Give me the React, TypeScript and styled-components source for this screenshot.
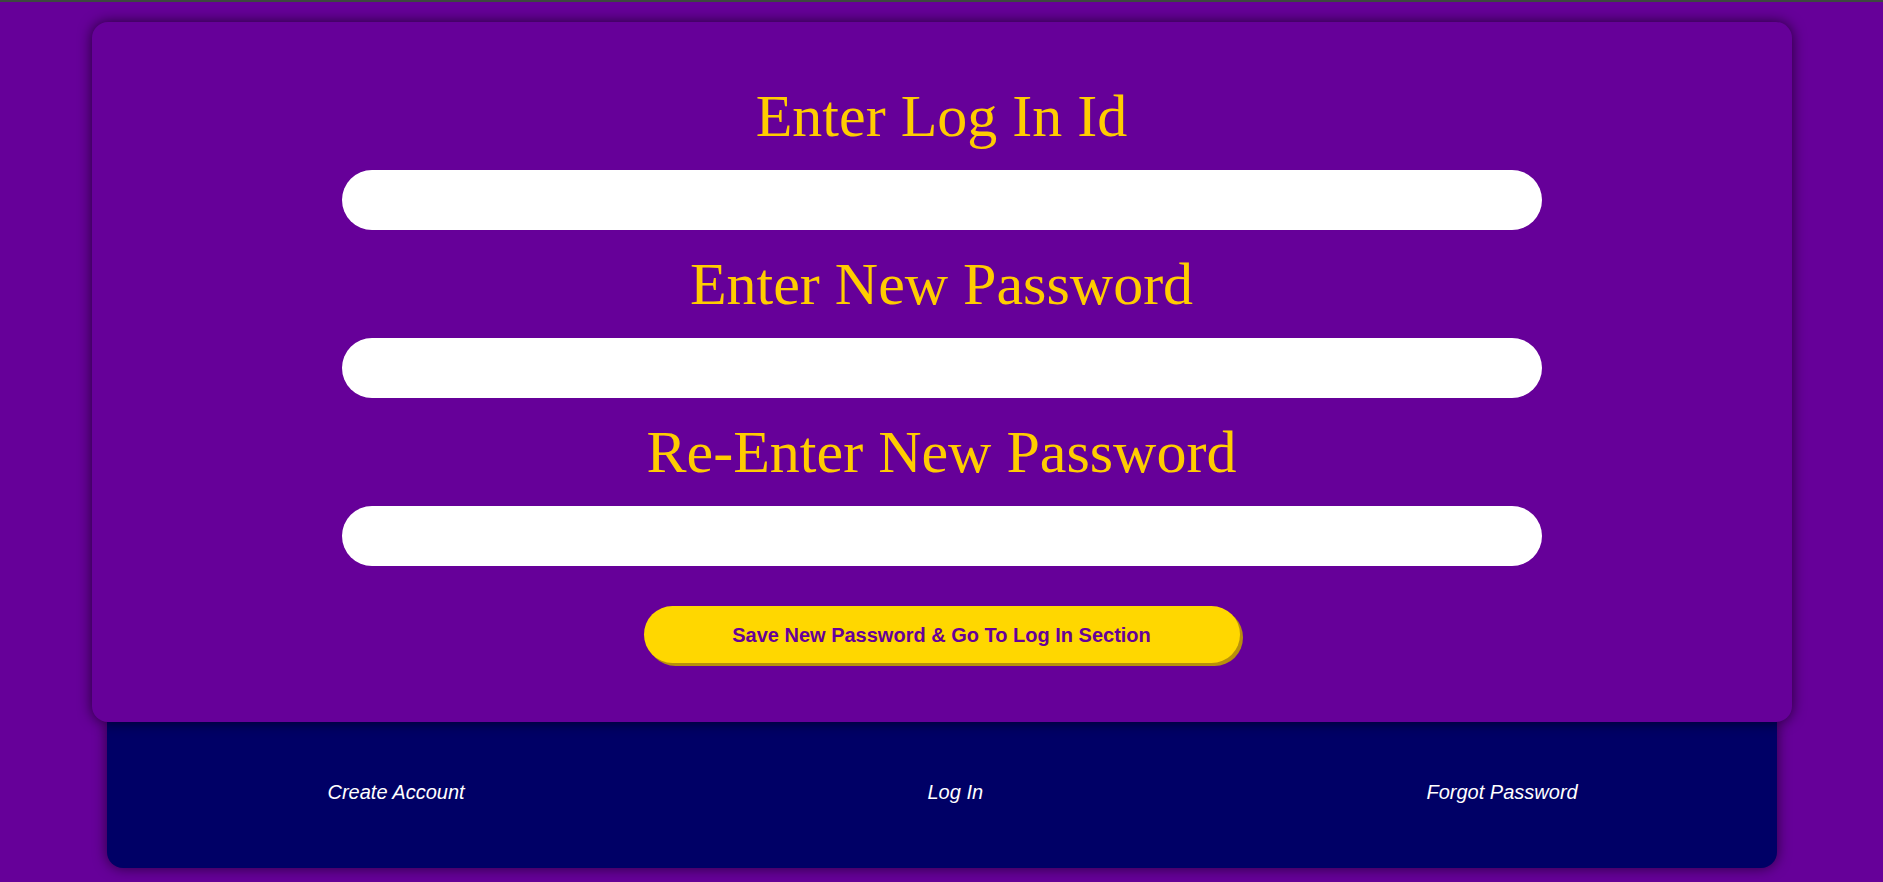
import React from "react";
import styled, { createGlobalStyle } from "styled-components";

const GlobalStyle = createGlobalStyle`
  html, body {
    margin: 0;
    padding: 0;
    background: #660099;
  }
  body {
    font-family: "Liberation Serif", "Times New Roman", serif;
  }
`;

const Page = styled.div`
  min-height: 882px;
  border-top: 2px solid #3d4840;
  box-sizing: border-box;
  padding-top: 20px;
  display: flex;
  flex-direction: column;
  align-items: center;
`;

const Card = styled.form`
  position: relative;
  z-index: 2;
  width: 1700px;
  box-sizing: border-box;
  padding: 61px 0 59px;
  background: #660099;
  border-radius: 16px;
  box-shadow: 0 0 14px rgba(0, 0, 0, 0.65);
  display: flex;
  flex-direction: column;
  align-items: center;
  gap: 21px;
`;

const Title = styled.h2`
  margin: 0;
  font-family: "Liberation Serif", "Times New Roman", serif;
  font-weight: normal;
  font-size: 60px;
  line-height: 66px;
  color: #ffcc00;
  text-align: center;
`;

const Field = styled.input`
  width: 1200px;
  height: 60px;
  box-sizing: border-box;
  border: none;
  border-radius: 30px;
  background: #ffffff;
  padding: 0 28px;
  font-family: "Liberation Sans", Arial, sans-serif;
  font-size: 20px;
  outline: none;
`;

const SaveButton = styled.button`
  margin-top: 19px;
  width: 596px;
  height: 57px;
  padding-top: 2px;
  border: none;
  border-radius: 29px;
  background: #ffd700;
  box-shadow: 3px 3px 0 #b8900b;
  color: #660099;
  font-family: "Liberation Sans", Arial, sans-serif;
  font-weight: bold;
  font-size: 20px;
  cursor: pointer;
`;

const Footer = styled.nav`
  position: relative;
  z-index: 1;
  width: 1670px;
  box-sizing: border-box;
  padding: 59px 0 64px 221px;
  background: #000066;
  border-radius: 0 0 16px 16px;
  box-shadow: 0 0 14px rgba(0, 0, 0, 0.6);
  display: grid;
  grid-template-columns: 600px 499px auto;
  align-items: center;
`;

const FooterLink = styled.a`
  justify-self: start;
  color: #ffffff;
  font-family: "Liberation Sans", Arial, sans-serif;
  font-style: italic;
  font-size: 20px;
  line-height: 23px;
  text-decoration: none;
  cursor: pointer;
`;

const fields = ["Enter Log In Id", "Enter New Password", "Re-Enter New Password"];

export default function App() {
  return (
    <>
      <GlobalStyle />
      <Page>
        <Card onSubmit={(e) => e.preventDefault()}>
          {fields.map((label, i) => (
            <React.Fragment key={label}>
              <Title>{label}</Title>
              <Field type={i === 0 ? "text" : "password"} aria-label={label} />
            </React.Fragment>
          ))}
          <SaveButton type="submit">Save New Password &amp; Go To Log In Section</SaveButton>
        </Card>
        <Footer>
          <FooterLink>Create Account</FooterLink>
          <FooterLink>Log In</FooterLink>
          <FooterLink>Forgot Password</FooterLink>
        </Footer>
      </Page>
    </>
  );
}
